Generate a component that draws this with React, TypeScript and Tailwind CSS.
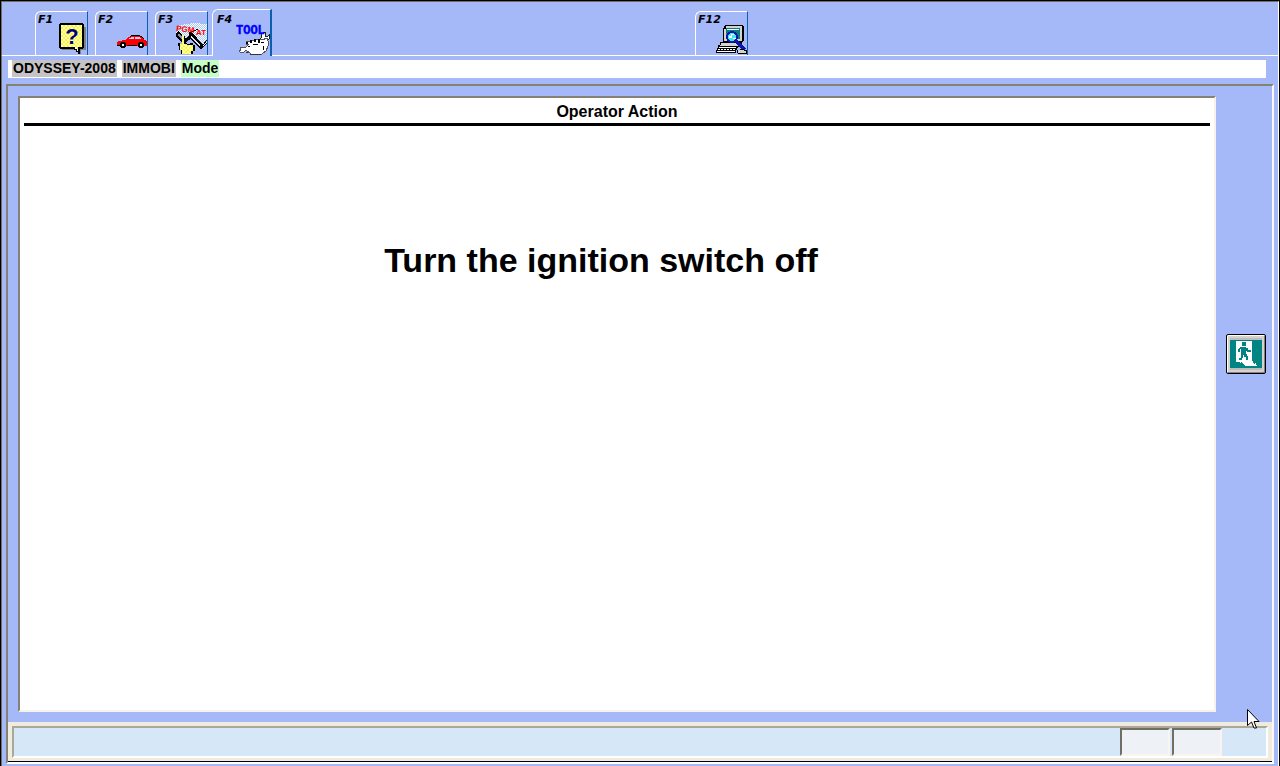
import React from "react";

interface TabProps {
  label: string;
  title: string;
  active?: boolean;
  children: React.ReactNode;
}

const Tab: React.FC<TabProps> = ({ label, title, active = false, children }) => {
  return (
    <button
      type="button"
      aria-label={`${label} ${title}`}
      className={
        active
          ? "grid h-[47px] w-[60px] rounded-tl-md border-t border-l border-r-2 border-t-white border-l-white border-r-[#0a5fae] bg-[#a5b8f7] pt-0.5 pl-1"
          : "mb-px grid h-11 w-[53px] rounded-tl-md border-t border-l border-t-white border-l-white border-r border-r-[#0a5fae] bg-[#a5b8f7] pl-0.5"
      }
    >
      <span className="z-10 col-start-1 row-start-1 self-start justify-self-start font-['DejaVu_Sans',sans-serif] text-[11px] leading-4 font-bold italic">
        {label}
      </span>
      <span className="col-start-1 row-start-1 self-end justify-self-end">
        {children}
      </span>
    </button>
  );
};

const HelpIcon = () => (
  <svg width="32" height="34" viewBox="0 0 32 34" shapeRendering="crispEdges">
    <defs>
      <pattern id="yellowDots" width="4" height="4" patternUnits="userSpaceOnUse">
        <rect width="4" height="4" fill="#fff" />
        <rect width="2" height="2" fill="#ff0" />
        <rect x="2" y="2" width="2" height="2" fill="#ff0" />
      </pattern>
    </defs>
    <path d="M7 6h24v23h-5v4h-2v-4H7z" fill="#808080" />
    <path d="M5 2h23v1h1v24h-1v1h-3v5h-2v-2h-2v-2h-2v-1H5v-1H4V3h1z" fill="#000" />
    <path d="M6 4h21v22h-4v4h-1v-2h-2v-2H6z" fill="url(#yellowDots)" />
    <text
      x="17"
      y="23"
      textAnchor="middle"
      fontFamily="Liberation Sans, sans-serif"
      fontSize="22"
      fontWeight="700"
      fill="#00007b"
    >
      ?
    </text>
  </svg>
);

const CarIcon = () => (
  <svg width="32" height="34" viewBox="0 0 32 34" shapeRendering="crispEdges">
    <path d="M2 21h1v-1h4v-1h6v-1h16v1h2v1h1v5H2z" fill="#f00" />
    <path d="M11 19v-1h1v-1h1v-1h2v-1h11v1h1v1h1v1h1v1z" fill="#f00" />
    <path d="M16 16h3v2h-5v-1h2zM20 16h5v1h1v1h-6z" fill="#c6d4ff" />
    <path d="M16 14h9v1h-9zM25 15h2v1h-2zM27 16h1v1h-1zM28 17h1v1h-1zM15 15h1v1h-1zM2 24h3v1H2zM12 24h10v1H12z" fill="#000" />
    <path d="M6 21h4v1h1v4h-1v1H6v-1H5v-4h1zM24 21h4v1h1v4h-1v1h-4v-1h-1v-4h1z" fill="#000" />
    <path d="M7 23h2v2H7zM25 23h2v2h-2z" fill="#fff" />
  </svg>
);

const CartridgeIcon = () => (
  <svg width="32" height="34" viewBox="0 0 32 34" shapeRendering="crispEdges">
    <defs>
      <pattern id="whiteDots" width="2" height="2" patternUnits="userSpaceOnUse">
        <rect width="2" height="2" fill="#a5c8f7" />
        <rect width="1" height="1" fill="#fff" />
        <rect x="1" y="1" width="1" height="1" fill="#fff" />
      </pattern>
    </defs>
    <path d="M4 4l14-2 14 1v20l-8 4-8-9-8 2-7-8z" fill="url(#whiteDots)" />
    <path d="M1 12l2-2 8 7 6-4v4l-7 5h-2l-7-6z" fill="#000" />
    <path d="M2 14l2-1 6 6-1 2z" fill="#8a93b8" />
    <path d="M14 12l3-1 11 13-1 4h-2L14 16z" fill="#000" />
    <path d="M16 14l9 10v2l-9-9z" fill="#dfe6ff" />
    <path d="M14 12l9-4M28 24l4-5M27 27l5-5" stroke="#000" strokeWidth="1" />
    <path d="M7 15h3v7h2v1h3v-1h3v2h2v6h-2v3H6v-4H4v-4H3v-3h2v1h2z" fill="#000" />
    <path d="M7 14h2v9h3v1h6v6h-2v3H7v-4H5v-6h2z" fill="url(#yellowDots)" />
    <text
      x="1"
      y="10"
      fontFamily="Liberation Sans, sans-serif"
      fontSize="8"
      fontWeight="700"
      fill="#f00"
      transform="rotate(6 1 10)"
    >
      PGM
    </text>
    <text
      x="21"
      y="14"
      fontFamily="Liberation Sans, sans-serif"
      fontSize="8"
      fontWeight="700"
      fill="#f00"
    >
      AT
    </text>
  </svg>
);

const ToolIcon = () => (
  <svg width="34" height="34" viewBox="0 0 34 34" shapeRendering="crispEdges">
    <path d="M28 10l2 1-1 3 2 1 2-2v4l-3 2-3-1-4 4-2-2 5-5-1-2z" fill="#fff" stroke="#222" strokeWidth="1" />
    <path
      d="M10 19h5v-1h3v-1h6l2 1 5-2 1 3v5l-2 5-4 3H15l-5-4-2 2-3 1-2-2 2-1-1-2 3-1 2 1 4-4h-3z"
      fill="#fff"
      stroke="#555"
      strokeWidth="1"
    />
    <path
      d="M10 20h2v2h-2zM14 18h2v3h-2zM18 17h2v3h-2zM22 17h2v4h-2zM25 20h3v1h-3zM12 24h2v1h-2zM17 22h5v1h-5zM27 24h1v4h-1z"
      fill="#000"
    />
    <path d="M14 32h11v1H14zM10 30h2v1h-2z" fill="#333" />
    <text
      x="0"
      y="12"
      fontFamily="Liberation Mono, monospace"
      fontSize="12"
      fontWeight="700"
      fill="#00f"
      stroke="#00f"
      strokeWidth="0.4"
    >
      TOOL
    </text>
  </svg>
);

const ComputerIcon = () => (
  <svg width="32" height="34" viewBox="0 0 32 34" shapeRendering="crispEdges">
    <path d="M10 4h18v1h1v15h-1v1H8V7h1V5h1z" fill="#000" />
    <path d="M11 5h16v2H11zM9 8h2v12H9zM11 18h16v2H11zM25 7h2v12h-2z" fill="#d6d3ce" />
    <path d="M11 7h14v11H11z" fill="#087b84" />
    <path d="M12 8h12v1H12z" fill="#fff" />
    <path d="M5 21h22v5H3v-2h2z" fill="#000" />
    <path d="M6 22h20v3H5v-1h1z" fill="#d6d3ce" />
    <path d="M3 25h20v2h-1v2h-1v3H1v-3h1v-2h1z" fill="#000" />
    <path d="M4 26h17v1H4zM2 30h18v1H2z" fill="#fff" />
    <path
      d="M3 28h2v1H3zM6 28h2v1H6zM9 28h2v1H9zM12 28h2v1h-2zM15 28h2v1h-2zM18 28h2v1h-2z"
      fill="#fff"
    />
    <circle cx="17" cy="16" r="5" fill="#42e7ef" stroke="#0818a5" strokeWidth="2" />
    <path d="M14 15h2v-2h3v1h-2v3h-3zM18 17h3v1h-3z" fill="#fff" />
    <path d="M21 20l9 9" stroke="#0818a5" strokeWidth="3" />
    <path d="M22 29h3v-1h4v1h3v4h-9v-1h-1z" fill="#000" />
    <path d="M23 29h6v1h2v2h-8z" fill="#d6d3ce" />
  </svg>
);

const ExitIcon = () => (
  <svg width="32" height="32" viewBox="0 0 32 32" shapeRendering="crispEdges">
    <rect width="32" height="32" fill="#bdbdbd" />
    <rect y="2" width="32" height="28" fill="#008484" />
    <path d="M6 3h16v16l5 9H13l-4-4H6z" fill="#fff" />
    <path
      d="M12 4h4v4h-4zM12 9h4v1h2v2h3v2h-4v-1h-1v3h1v2h1v4h-2v-3h-2v-2h-1v3h-1v2H9v-2h2v-9h-1v3H8v-3h1v-1h1v-1h2z"
      fill="#008484"
    />
    <path d="M11 24h1v1h1v1h1v1h1v2h-2v-1h-1v-1h-1zM22 20h1v2h1v2h1v2h-1v-1h-1v-2h-1z" fill="#008484" />
  </svg>
);

const Pointer = () => (
  <svg
    className="pointer-events-none absolute right-[19px] bottom-9"
    width="13"
    height="21"
    viewBox="0 0 13 21"
    aria-hidden="true"
  >
    <path
      d="M.5.5v16l4-3.500 2.500 6h2.500l-2.500-6.500h5z"
      fill="#fff"
      stroke="#000"
      strokeWidth="1"
    />
  </svg>
);

const App: React.FC = () => {
  return (
    <div className="relative flex min-h-screen flex-col border-t border-r border-l border-black bg-[#a5b8f7] font-['Liberation_Sans',Arial,sans-serif] text-black">
      <div className="flex flex-1 flex-col border-t border-r border-l border-t-[#716f64] border-r-white border-l-[#716f64] pb-0.5">
        <nav className="flex h-[54px] items-end pl-[33px] shadow-[inset_0_-1px_0_#fff]">
          <Tab label="F1" title="Help">
            <HelpIcon />
          </Tab>
          <div className="ml-[7px] flex">
            <Tab label="F2" title="Vehicle">
              <CarIcon />
            </Tab>
          </div>
          <div className="mr-1 ml-[7px] flex">
            <Tab label="F3" title="System">
              <CartridgeIcon />
            </Tab>
          </div>
          <Tab label="F4" title="Tool" active>
            <ToolIcon />
          </Tab>
          <div className="ml-[423px] flex">
            <Tab label="F12" title="Computer">
              <ComputerIcon />
            </Tab>
          </div>
        </nav>

        <div className="mt-1 mr-3 ml-1.5 flex h-[18px] items-start gap-[5px] bg-white pl-1 text-[14px] leading-[17px] font-bold">
          <span className="bg-[#c6c3c6] px-px">ODYSSEY-2008</span>
          <span className="bg-[#c6c3c6] px-px">IMMOBI</span>
          <span className="bg-[#c6ffc6] px-px">Mode</span>
        </div>

        <div className="mt-1.5 mr-1 ml-1 flex flex-1 flex-col border-2 border-t-[#858175] border-r-[#fbf7f4] border-b-white border-l-[#858175]">
          <div className="flex flex-1 py-2.5 pr-1.5 pl-2.5">
            <main className="flex flex-1 flex-col border-2 border-t-[#858175] border-r-[#f7f1ea] border-b-[#f7f1ea] border-l-[#858175] bg-white px-1">
              <h1 className="border-b-3 border-black pt-[5px] pb-0.5 text-center text-[16px] leading-[18px] font-bold">
                Operator Action
              </h1>
              <p className="pt-[114px] pr-8 text-center text-[34px] leading-10 font-bold">
                Turn the ignition switch off
              </p>
            </main>
            <aside className="ml-2.5 flex items-center pb-[100px]">
              <button
                type="button"
                aria-label="Exit"
                className="flex h-10 w-10 items-center justify-center rounded-xs border border-black bg-[#d6d3ce] shadow-[inset_1px_1px_0_#fff,inset_-1px_-1px_0_#848284]"
              >
                <ExitIcon />
              </button>
            </aside>
          </div>

          <footer className="border-b border-black bg-[#efebde] px-1 pt-1 pb-[3px]">
            <div className="flex h-8 justify-end gap-0.5 border-2 border-t-[#aca899] border-r-white border-b-white border-l-[#aca899] bg-[#d6e7f7] pr-11">
              <div className="h-7 w-[50px] border-2 border-t-[#716f64] border-r-[#fbf3ee] border-b-[#fbf3ee] border-l-[#716f64] bg-[#eef2f7]" />
              <div className="h-7 w-[50px] border-2 border-t-[#716f64] border-r-[#fbf3ee] border-b-[#fbf3ee] border-l-[#716f64] bg-[#eef2f7]" />
            </div>
          </footer>
        </div>
      </div>
      <Pointer />
    </div>
  );
};

export default App;
